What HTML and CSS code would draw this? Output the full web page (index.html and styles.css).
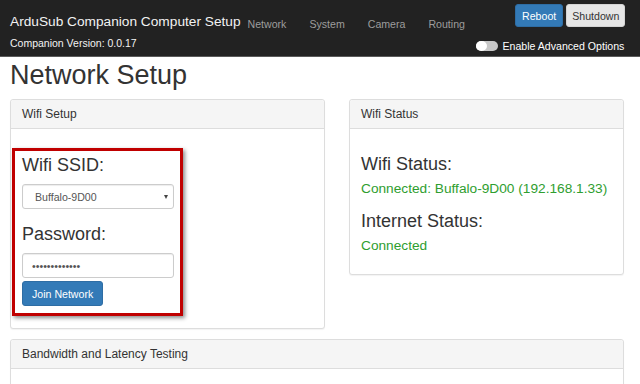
FILE: index.html
```html
<!DOCTYPE html>
<html>
<head>
<meta charset="utf-8">
<title>ArduSub Companion Computer Setup</title>
<link rel="stylesheet" href="styles.css">
</head>
<body>
<header class="navbar">
  <div class="brand">
    <div class="brand-title">ArduSub Companion Computer Setup</div>
    <div class="brand-version">Companion Version: 0.0.17</div>
  </div>
  <nav class="nav-links">
    <a href="#">Network</a>
    <a href="#">System</a>
    <a href="#">Camera</a>
    <a href="#">Routing</a>
  </nav>
  <div class="nav-right">
    <div class="nav-btns">
      <button class="btn btn-primary">Reboot</button>
      <button class="btn btn-default">Shutdown</button>
    </div>
    <label class="toggle"><span class="switch"><span class="knob"></span></span>Enable Advanced Options</label>
  </div>
</header>
<main class="page">
  <h1 class="page-title">Network Setup</h1>
  <div class="cols">
    <section class="panel">
      <div class="panel-heading">Wifi Setup</div>
      <div class="panel-body setup-body">
        <div class="highlight">
          <div class="field-label">Wifi SSID:</div>
          <div class="select-wrap">
            <select class="form-control select">
              <option>Buffalo-9D00</option>
            </select>
          </div>
          <div class="field-label pw-label">Password:</div>
          <input class="form-control input" type="password" value="1234567890123">
          <button class="btn btn-primary btn-join">Join Network</button>
        </div>
      </div>
    </section>
    <section class="panel">
      <div class="panel-heading">Wifi Status</div>
      <div class="panel-body status-body">
        <div class="field-label">Wifi Status:</div>
        <div class="status-ok">Connected: Buffalo-9D00 (192.168.1.33)</div>
        <div class="field-label inet-label">Internet Status:</div>
        <div class="status-ok">Connected</div>
      </div>
    </section>
  </div>
  <section class="panel panel-wide">
    <div class="panel-heading">Bandwidth and Latency Testing</div>
    <div class="panel-body wide-body"></div>
  </section>
</main>
</body>
</html>
```

FILE: styles.css
```css
* { box-sizing: border-box; }
html, body { margin: 0; padding: 0; }
body {
  font-family: "Liberation Sans", Arial, sans-serif;
  color: #333;
  background: #fff;
  overflow: hidden;
  height: 384px;
}
.navbar {
  display: flex;
  align-items: flex-start;
  height: 57px;
  background: #222;
  border-bottom: 1px solid #5a5a5a;
  padding: 0 15px 0 10px;
  white-space: nowrap;
}
.navbar > * { flex-shrink: 0; }
.brand { padding-top: 14px; }
.brand-title {
  font-size: 13.7px;
  line-height: 16px;
  color: #f2f2f2;
}
.brand-version {
  font-size: 10.5px;
  line-height: 12px;
  color: #f2f2f2;
  margin-top: 7px;
}
.nav-links {
  display: flex;
  padding-top: 18px;
  margin-left: -4.5px;
}
.nav-links a {
  font-size: 10.6px;
  line-height: 12px;
  color: #9d9d9d;
  text-decoration: none;
  padding: 0 11.5px;
}
.nav-right {
  margin-left: auto;
  display: flex;
  flex-direction: column;
  align-items: flex-end;
  padding-top: 4px;
}
.nav-btns { display: flex; gap: 3px; }
.btn {
  font-family: "Liberation Sans", Arial, sans-serif;
  font-size: 10.6px;
  height: 23px;
  padding: 0 6px;
  border-radius: 3px;
  border: 1px solid transparent;
  cursor: pointer;
  white-space: nowrap;
}
.btn-primary {
  background: #337ab7;
  border-color: #2e6da4;
  color: #fff;
}
.btn-default {
  background: #e6e6e6;
  border-color: #d4d4d4;
  color: #333;
  padding: 0 5px;
}
.toggle {
  display: flex;
  align-items: center;
  margin-top: 13px;
  margin-right: 1px;
  font-size: 10.6px;
  line-height: 12px;
  color: #fff;
}
.switch {
  display: inline-block;
  width: 22px;
  height: 10px;
  border-radius: 5px;
  background: #c8c8c8;
  margin-right: 4px;
  position: relative;
  flex-shrink: 0;
}
.knob {
  position: absolute;
  left: 0;
  top: 0;
  width: 11px;
  height: 10px;
  border-radius: 50%;
  background: #fff;
}
.page { padding: 0 16px 0 10px; }
.page-title {
  font-size: 27px;
  line-height: 30px;
  font-weight: normal;
  margin: 3px 0 9px;
  color: #333;
}
.cols {
  display: grid;
  grid-template-columns: 315px 275px;
  column-gap: 24px;
  align-items: start;
}
.panel {
  border: 1px solid #ddd;
  border-radius: 3px;
  background: #fff;
  box-shadow: 0 1px 1px rgba(0,0,0,.05);
}
.panel-heading {
  background: #f5f5f5;
  border-bottom: 1px solid #ddd;
  font-size: 12px;
  line-height: 14px;
  padding: 7px 11px;
  color: #333;
  border-radius: 3px 3px 0 0;
}
.setup-body { padding: 19px 0 12px 1px; }
.highlight {
  width: 171px;
  border: 3px solid #c00000;
  box-shadow: 2px 2px 4px rgba(0,0,0,.45);
  padding: 4px 6px 7px 7px;
}
.field-label {
  font-size: 18px;
  line-height: 20px;
  color: #333;
}
.form-control {
  display: block;
  width: 152px;
  height: 25px;
  border: 1px solid #ccc;
  border-radius: 3px;
  background: #fff;
  box-shadow: inset 0 1px 1px rgba(0,0,0,.075);
  font-family: "Liberation Sans", Arial, sans-serif;
  font-size: 10.6px;
  color: #555;
}
.select-wrap {
  position: relative;
  width: 152px;
  margin-top: 9px;
}
.select-wrap::after {
  content: "";
  position: absolute;
  right: 6px;
  top: 11px;
  border-left: 2.5px solid transparent;
  border-right: 2.5px solid transparent;
  border-top: 4px solid #444;
  pointer-events: none;
}
.select {
  appearance: none;
  -webkit-appearance: none;
  padding: 0 0 0 12px;
}
.pw-label { margin-top: 15px; }
.input {
  margin-top: 9px;
  padding: 0 9px;
  outline: none;
}
.btn-join {
  display: block;
  margin-top: 3px;
  height: 25px;
  padding: 0 9px;
}
.status-body { padding: 25px 11px 20px; }
.status-ok {
  font-size: 13.7px;
  line-height: 16px;
  color: #2f9e2f;
  margin-top: 7px;
}
.inet-label { margin-top: 14px; }
.panel-wide {
  margin-top: 10px;
  width: 614px;
}
.wide-body { height: 40px; }
```
